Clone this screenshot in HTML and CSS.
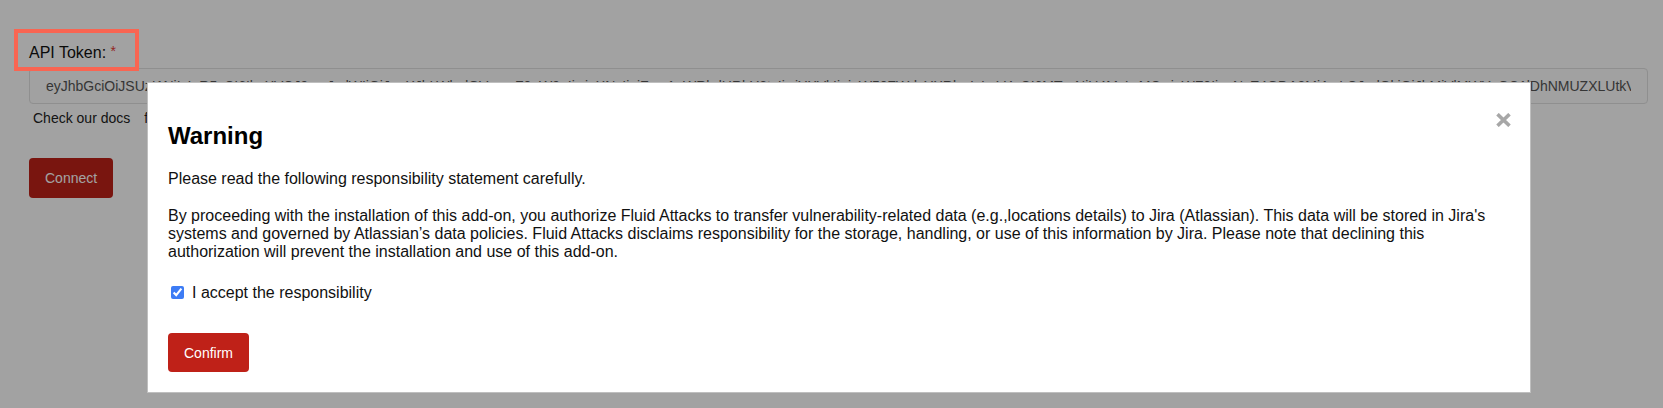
FILE: index.html
```html
<!DOCTYPE html>
<html lang="en">
<head>
<meta charset="utf-8">
<title>API Token</title>
<link rel="stylesheet" href="styles.css">
</head>
<body>
<main class="page">
  <form class="token-form">
    <label class="field-label" for="token">API Token: <span class="required">*</span></label>
    <input id="token" class="token-input" type="text" readonly value="eyJhbGciOiJSUzI1NiIsInR5cCI6IkpXVCJ9.eyJzdWIiOiJqaXJhLWludGVncmF0aW9uIiwiaXNzIjoiZmx1aWRhdHRhY2tzIiwiYXVkIjoiaW50ZWdyYXRlcyIsImV4cCI6MTcyNjU4MzIwMCwiaWF0IjoxNzE4ODA3MjAwLCJqdGkiOiJhMjVlMWYzOC1lDhNMUZXLUtkVDYzYy0zZWQ2NGJhY2RhZTkiLCJ1c2VyX2VtYWlsIjoidGVzdEBmbHVpZGF0dGFja3MuY29tIn0">
    <p class="help-text">Check our docs<span class="help-more">for</span></p>
    <div class="actions">
      <button type="button" class="btn btn-primary">Connect</button>
    </div>
  </form>
</main>

<div class="overlay"></div>

<div class="annotation"></div>

<section class="modal" role="dialog" aria-labelledby="modal-title">
  <button type="button" class="modal-close" aria-label="Close">
    <svg width="15" height="14" viewBox="0 0 15 14" aria-hidden="true">
      <path d="M1.5 1.2 L13.5 12.8 M13.5 1.2 L1.5 12.8" stroke="#a7a7a7" stroke-width="3.6" fill="none"/>
    </svg>
  </button>
  <h2 id="modal-title" class="modal-title">Warning</h2>
  <p class="modal-intro">Please read the following responsibility statement carefully.</p>
  <p class="modal-text">By proceeding with the installation of this add-on, you authorize Fluid Attacks to transfer vulnerability-related data (e.g.,locations details) to Jira (Atlassian). This data will be stored in Jira's systems and governed by Atlassian’s data policies. Fluid Attacks disclaims responsibility for the storage, handling, or use of this information by Jira. Please note that declining this authorization will prevent the installation and use of this add-on.</p>
  <label class="accept">
    <input type="checkbox" class="accept-box" checked>
    <span>I accept the responsibility</span>
  </label>
  <div class="modal-actions">
    <button type="button" class="btn btn-primary btn-confirm">Confirm</button>
  </div>
</section>
</body>
</html>
```
FILE: styles.css
```css
* {
  box-sizing: border-box;
}

html, body {
  margin: 0;
  padding: 0;
  background: #ffffff;
  font-family: "Liberation Sans", Arial, Helvetica, sans-serif;
  color: #111;
}

.page {
  padding: 41px 15px 0 29px;
}

.token-form {
  display: flex;
  flex-direction: column;
}

.field-label {
  font-size: 16px;
  line-height: 20px;
  color: #111;
}

.required {
  color: #e83a36;
  font-size: 14px;
  vertical-align: 2px;
}

.token-input {
  margin-top: 5px;
  width: 100%;
  height: 36px;
  padding: 0 16px;
  border: 1px solid #e1e1e1;
  border-radius: 4px;
  background: #fdfdfd;
  font-family: "Liberation Sans", Arial, Helvetica, sans-serif;
  font-size: 14px;
  color: #555;
  outline: none;
}

.help-text {
  margin: 6px 0 0 4px;
  font-size: 14px;
  line-height: 17px;
  color: #222;
}

.help-more {
  margin-left: 14px;
}

.actions {
  margin-top: 31px;
  display: flex;
}

.btn {
  font-family: "Liberation Sans", Arial, Helvetica, sans-serif;
  font-size: 14px;
  border: none;
  border-radius: 4px;
  cursor: pointer;
}

.btn-primary {
  background: #bf2118;
  color: #ffffff;
  height: 40px;
  padding: 0 16px;
}

.btn-confirm {
  height: 39px;
}

.overlay {
  position: fixed;
  inset: 0;
  background: rgba(0, 0, 0, 0.365);
}

.annotation {
  position: absolute;
  left: 14px;
  top: 29px;
  width: 125px;
  height: 42px;
  border: 4px solid #f96552;
}

.modal {
  position: fixed;
  left: 147px;
  top: 82px;
  width: 1384px;
  background: #ffffff;
  border: 1px solid rgba(0, 0, 0, 0.25);
  padding: 39px 20px 20px 20px;
}

.modal-close {
  position: absolute;
  top: 30px;
  right: 19px;
  width: 15px;
  height: 14px;
  padding: 0;
  border: none;
  background: none;
  display: flex;
}

.modal-title {
  margin: 0;
  font-size: 24px;
  line-height: 28px;
  font-weight: bold;
  color: #000;
}

.modal-intro {
  margin: 19px 0 0 0;
  font-size: 16px;
  line-height: 19px;
  color: #111;
}

.modal-text {
  margin: 19px 0 0 0;
  font-size: 16px;
  line-height: 18px;
  color: #111;
}

.accept {
  margin-top: 22px;
  display: flex;
  align-items: center;
  gap: 8px;
  font-size: 16px;
  line-height: 19px;
  color: #111;
}

.accept-box {
  margin: 0 0 0 3px;
  width: 13px;
  height: 13px;
  accent-color: #3d7cf5;
}

.modal-actions {
  margin-top: 31px;
  display: flex;
}
```
